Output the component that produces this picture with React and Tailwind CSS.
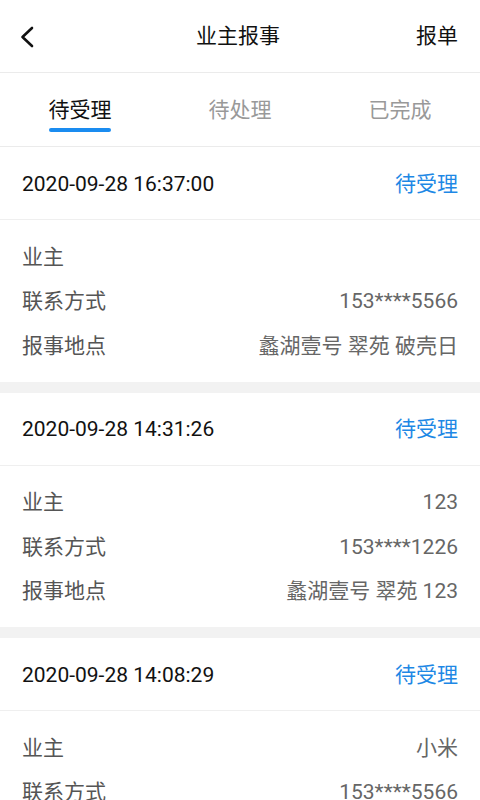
import { useState } from "react";

const tabs = ["待受理", "待处理", "已完成"];

const reports = [
  { time: "2020-09-28 16:37:00", owner: "", phone: "153****5566", place: "蠡湖壹号 翠苑 破壳日" },
  { time: "2020-09-28 14:31:26", owner: "123", phone: "153****1226", place: "蠡湖壹号 翠苑 123" },
  { time: "2020-09-28 14:08:29", owner: "小米", phone: "153****5566", place: "蠡湖壹号 翠苑 小米" },
];

function Row({ label, value }) {
  return (
    <div className="flex items-center justify-between h-[44.5px] text-[21px]">
      <span className="text-[#555]">{label}</span>
      <span className="text-[#666]">{value}</span>
    </div>
  );
}

export default function App() {
  const [active, setActive] = useState(0);

  return (
    <div
      className="w-[480px] h-[800px] overflow-hidden bg-[#f2f2f2]"
      style={{ fontFamily: "Roboto, 'Noto Sans CJK SC', sans-serif" }}
    >
      {/* Header */}
      <div className="h-[73px] bg-white flex items-center justify-between pl-[20px] pr-[22px] pt-[2px] border-b border-[#ebebeb]">
        <button className="w-[30px] h-[30px] flex items-center">
          <svg width="14" height="22" viewBox="0 0 14 22" fill="none">
            <path d="M12 2L2.5 11l9.5 9" stroke="#111" strokeWidth="2.6" strokeLinecap="round" strokeLinejoin="round" />
          </svg>
        </button>
        <h1 className="text-[21px] text-[#111] ml-[10px]">业主报事</h1>
        <button className="text-[21px] text-[#111]">报单</button>
      </div>

      {/* Tabs */}
      <div className="h-[74px] bg-white flex border-b border-[#ebebeb]">
        {tabs.map((t, i) => (
          <button
            key={t}
            onClick={() => setActive(i)}
            className="flex-1 flex flex-col items-center pt-[22px]"
          >
            <span className={`text-[21px] leading-[30px] ${active === i ? "text-[#111]" : "text-[#999]"}`}>{t}</span>
            <span className={`mt-[3px] h-[4px] w-[62px] rounded-full ${active === i ? "bg-[#1a8cf0]" : "bg-transparent"}`} />
          </button>
        ))}
      </div>

      {/* List */}
      <div className="flex flex-col gap-[11px]">
        {reports.map((r) => (
          <div key={r.time} className="bg-white">
            <div className="h-[73px] px-[22px] pt-[3px] flex items-center justify-between border-b border-[#efefef]">
              <span className="text-[21px] text-[#111]">{r.time}</span>
              <span className="text-[21px] text-[#1e88e5]">待受理</span>
            </div>
            <div className="px-[22px] pt-[15px] pb-[13px]">
              <Row label="业主" value={r.owner} />
              <Row label="联系方式" value={r.phone} />
              <Row label="报事地点" value={r.place} />
            </div>
          </div>
        ))}
      </div>
    </div>
  );
}
